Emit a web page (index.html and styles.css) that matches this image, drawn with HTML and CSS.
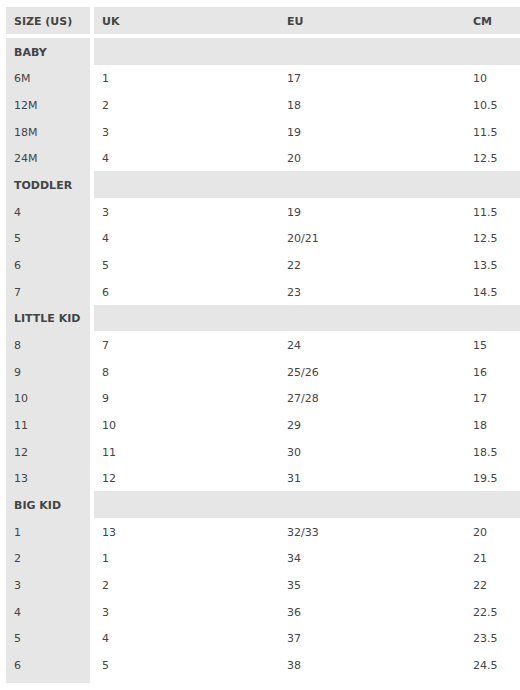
FILE: index.html
```html
<!DOCTYPE html>
<html>
<head>
<meta charset="utf-8">
<link rel="stylesheet" href="styles.css">
</head>
<body>
<div class="chart">
  <div class="head">
    <div class="size-cell">SIZE (US)</div>
    <div class="cells">
      <div>UK</div><div>EU</div><div>CM</div>
    </div>
  </div>
  <div class="body">
    <div class="sizes">
      <div class="size-row group">BABY</div>
      <div class="size-row">6M</div>
      <div class="size-row">12M</div>
      <div class="size-row">18M</div>
      <div class="size-row">24M</div>
      <div class="size-row group">TODDLER</div>
      <div class="size-row">4</div>
      <div class="size-row">5</div>
      <div class="size-row">6</div>
      <div class="size-row">7</div>
      <div class="size-row group">LITTLE KID</div>
      <div class="size-row">8</div>
      <div class="size-row">9</div>
      <div class="size-row">10</div>
      <div class="size-row">11</div>
      <div class="size-row">12</div>
      <div class="size-row">13</div>
      <div class="size-row group">BIG KID</div>
      <div class="size-row">1</div>
      <div class="size-row">2</div>
      <div class="size-row">3</div>
      <div class="size-row">4</div>
      <div class="size-row">5</div>
      <div class="size-row">6</div>
    </div>
    <div class="rows">
      <div class="row section"></div>
      <div class="row"><div>1</div><div>17</div><div>10</div></div>
      <div class="row"><div>2</div><div>18</div><div>10.5</div></div>
      <div class="row"><div>3</div><div>19</div><div>11.5</div></div>
      <div class="row"><div>4</div><div>20</div><div>12.5</div></div>
      <div class="row section"></div>
      <div class="row"><div>3</div><div>19</div><div>11.5</div></div>
      <div class="row"><div>4</div><div>20/21</div><div>12.5</div></div>
      <div class="row"><div>5</div><div>22</div><div>13.5</div></div>
      <div class="row"><div>6</div><div>23</div><div>14.5</div></div>
      <div class="row section"></div>
      <div class="row"><div>7</div><div>24</div><div>15</div></div>
      <div class="row"><div>8</div><div>25/26</div><div>16</div></div>
      <div class="row"><div>9</div><div>27/28</div><div>17</div></div>
      <div class="row"><div>10</div><div>29</div><div>18</div></div>
      <div class="row"><div>11</div><div>30</div><div>18.5</div></div>
      <div class="row"><div>12</div><div>31</div><div>19.5</div></div>
      <div class="row section"></div>
      <div class="row"><div>13</div><div>32/33</div><div>20</div></div>
      <div class="row"><div>1</div><div>34</div><div>21</div></div>
      <div class="row"><div>2</div><div>35</div><div>22</div></div>
      <div class="row"><div>3</div><div>36</div><div>22.5</div></div>
      <div class="row"><div>4</div><div>37</div><div>23.5</div></div>
      <div class="row"><div>5</div><div>38</div><div>24.5</div></div>
    </div>
  </div>
</div>
</body>
</html>
```
FILE: styles.css
```css
html, body {
  margin: 0;
  padding: 0;
  background: #ffffff;
}

.chart {
  margin: 7px 0 0 6px;
  font-family: "DejaVu Sans", Verdana, sans-serif;
  font-size: 11px;
  color: #444444;
}

.head {
  display: grid;
  grid-template-columns: 84px 1fr;
  column-gap: 4px;
  height: 27px;
  margin-bottom: 4px;
  font-weight: bold;
}

.head > div {
  background: #e6e6e6;
}

.size-cell {
  display: flex;
  align-items: center;
  padding: 1px 0 0 8px;
}

.cells {
  display: grid;
  grid-template-columns: 185px 186px 1fr;
  align-items: center;
  padding-top: 1px;
}

.cells > div,
.row > div {
  padding-left: 8px;
}

.body {
  display: grid;
  grid-template-columns: 84px 1fr;
  column-gap: 4px;
  align-items: start;
}

.sizes {
  background: #e6e6e6;
  padding-bottom: 5px;
}

.size-row {
  box-sizing: border-box;
  height: 26.66px;
  display: flex;
  align-items: center;
  padding: 2px 0 0 8px;
}

.size-row.group {
  font-weight: bold;
}

.row {
  box-sizing: border-box;
  height: 26.66px;
  display: grid;
  grid-template-columns: 185px 186px 1fr;
  align-items: center;
  padding-top: 2px;
}

.row.section {
  background: #e6e6e6;
}
```
